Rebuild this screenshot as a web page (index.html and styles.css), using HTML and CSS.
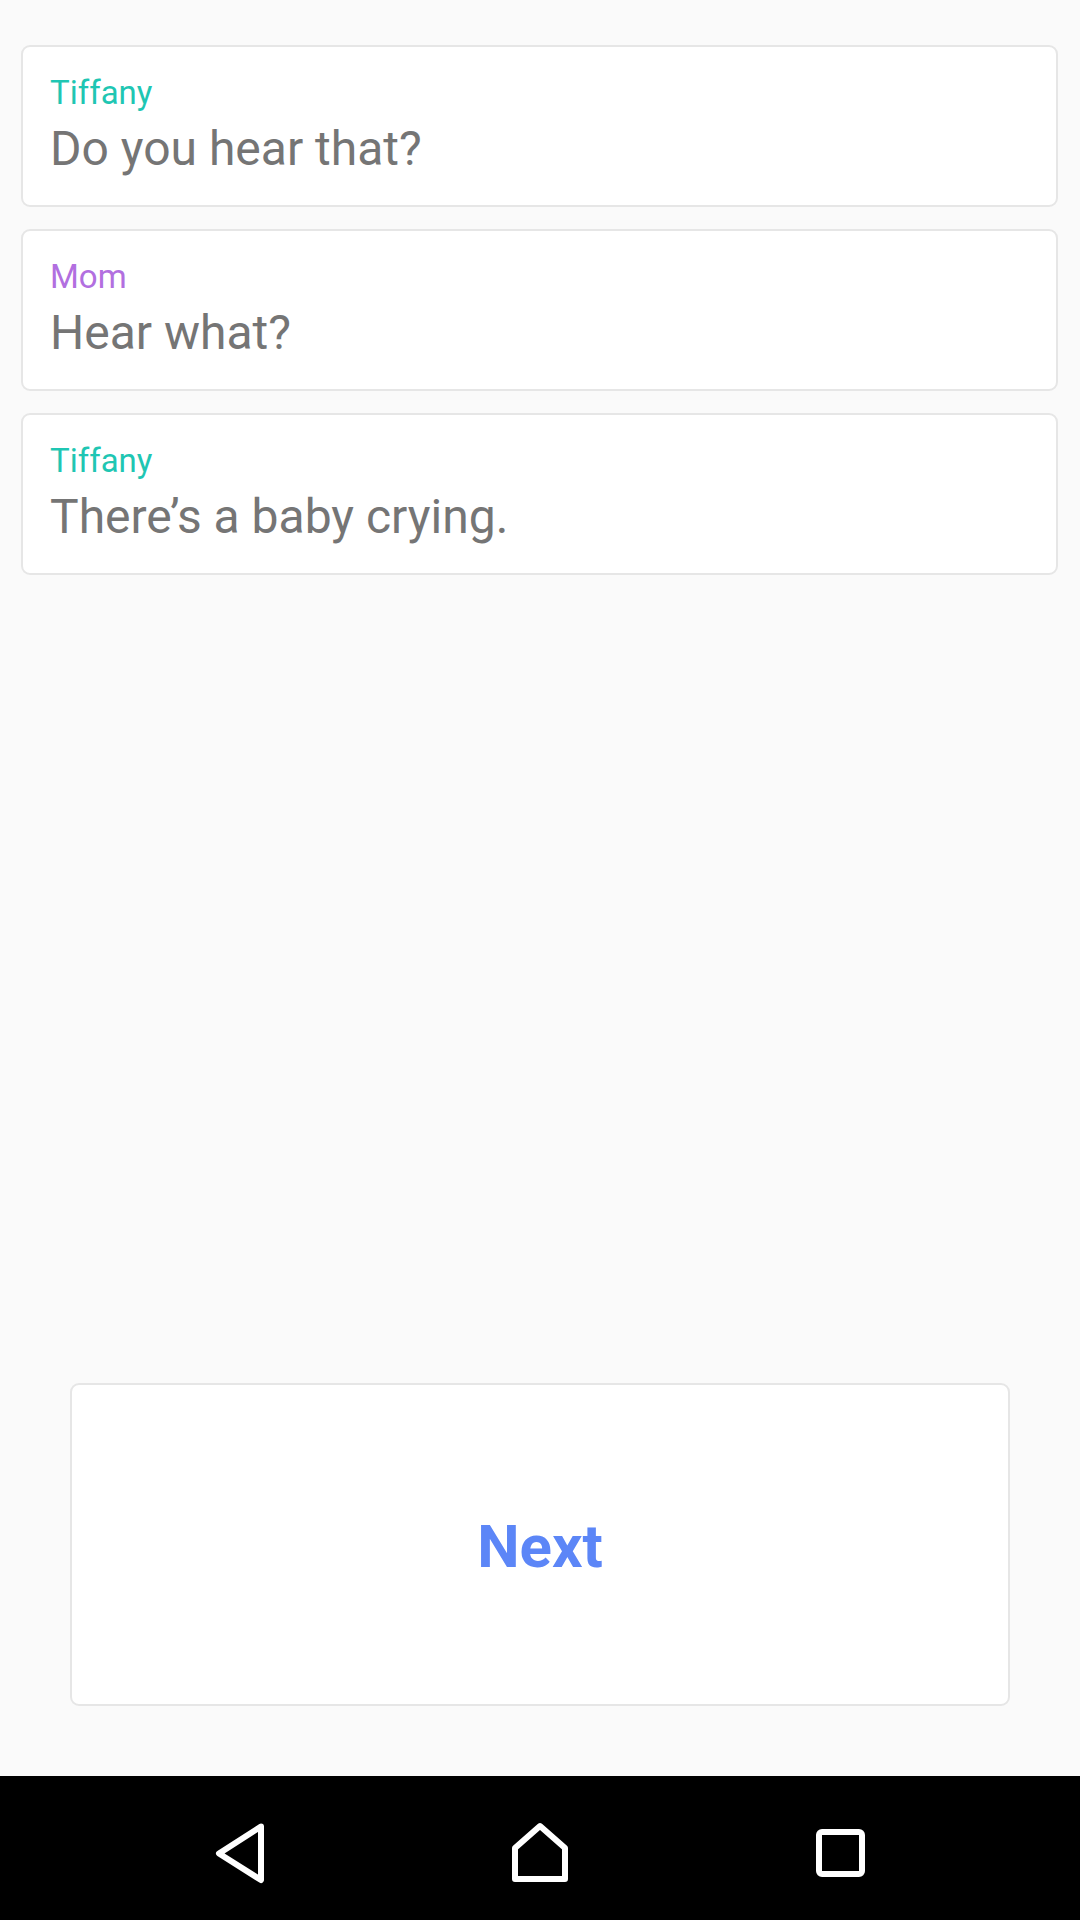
FILE: index.html
```html
<!DOCTYPE html>
<html>
<head>
<meta charset="utf-8">
<link rel="stylesheet" href="styles.css">
</head>
<body>
<div class="screen">
  <div class="messages">
    <div class="card">
      <div class="name name-tiffany">Tiffany</div>
      <div class="text">Do you hear that?</div>
    </div>
    <div class="card">
      <div class="name name-mom">Mom</div>
      <div class="text">Hear what?</div>
    </div>
    <div class="card">
      <div class="name name-tiffany">Tiffany</div>
      <div class="text">There’s a baby crying.</div>
    </div>
  </div>
  <div class="actions">
    <button class="next">Next</button>
  </div>
</div>
<nav class="navbar">
  <svg class="nav-icon" viewBox="0 0 72 72" width="72" height="72"><path d="M57 9.5 L15 36.5 L57 63 Z" fill="none" stroke="#fff" stroke-width="6" stroke-linejoin="round"/></svg>
  <svg class="nav-icon" viewBox="0 0 72 72" width="72" height="72"><path d="M11 31 L36 9 L61 31 V62 H11 Z" fill="none" stroke="#fff" stroke-width="6" stroke-linejoin="round"/></svg>
  <svg class="nav-icon" viewBox="0 0 72 72" width="72" height="72"><rect x="15" y="15" width="43" height="42" rx="3" fill="none" stroke="#fff" stroke-width="6"/></svg>
</nav>
</body>
</html>
```
FILE: styles.css
```css
html, body {
  margin: 0;
  padding: 0;
}
body {
  width: 1080px;
  height: 1920px;
  display: flex;
  flex-direction: column;
  background: #fafafa;
  font-family: Roboto, "Liberation Sans", sans-serif;
}
.screen {
  flex: 1;
  display: flex;
  flex-direction: column;
  justify-content: space-between;
}
.messages {
  display: flex;
  flex-direction: column;
  gap: 22px;
  padding: 45px 22px 0 21px;
}
.card {
  background: #ffffff;
  border: 2px solid #e6e6e6;
  border-radius: 9px;
  padding: 26px 27px 26px;
  height: 162px;
  box-sizing: border-box;
}
.name {
  font-size: 33px;
  line-height: 40px;
}
.name-tiffany { color: #1fc6b3; }
.name-mom { color: #b26fe0; }
.text {
  margin-top: 7px;
  font-size: 48px;
  line-height: 57px;
  color: #757575;
}
.actions {
  padding: 0 70px 70px;
}
.next {
  width: 100%;
  height: 323px;
  display: flex;
  align-items: center;
  justify-content: center;
  background: #ffffff;
  border: 2px solid #e6e6e6;
  border-radius: 9px;
  font-family: Roboto, "Liberation Sans", sans-serif;
  font-weight: 700;
  font-size: 60px;
  color: #5c86f7;
  padding: 0;
  padding-top: 4px;
}
.navbar {
  height: 144px;
  background: #000;
  display: flex;
  align-items: center;
  justify-content: center;
  gap: 228px;
  padding-top: 10px;
  box-sizing: border-box;
}
.nav-icon {
  display: block;
}
```
